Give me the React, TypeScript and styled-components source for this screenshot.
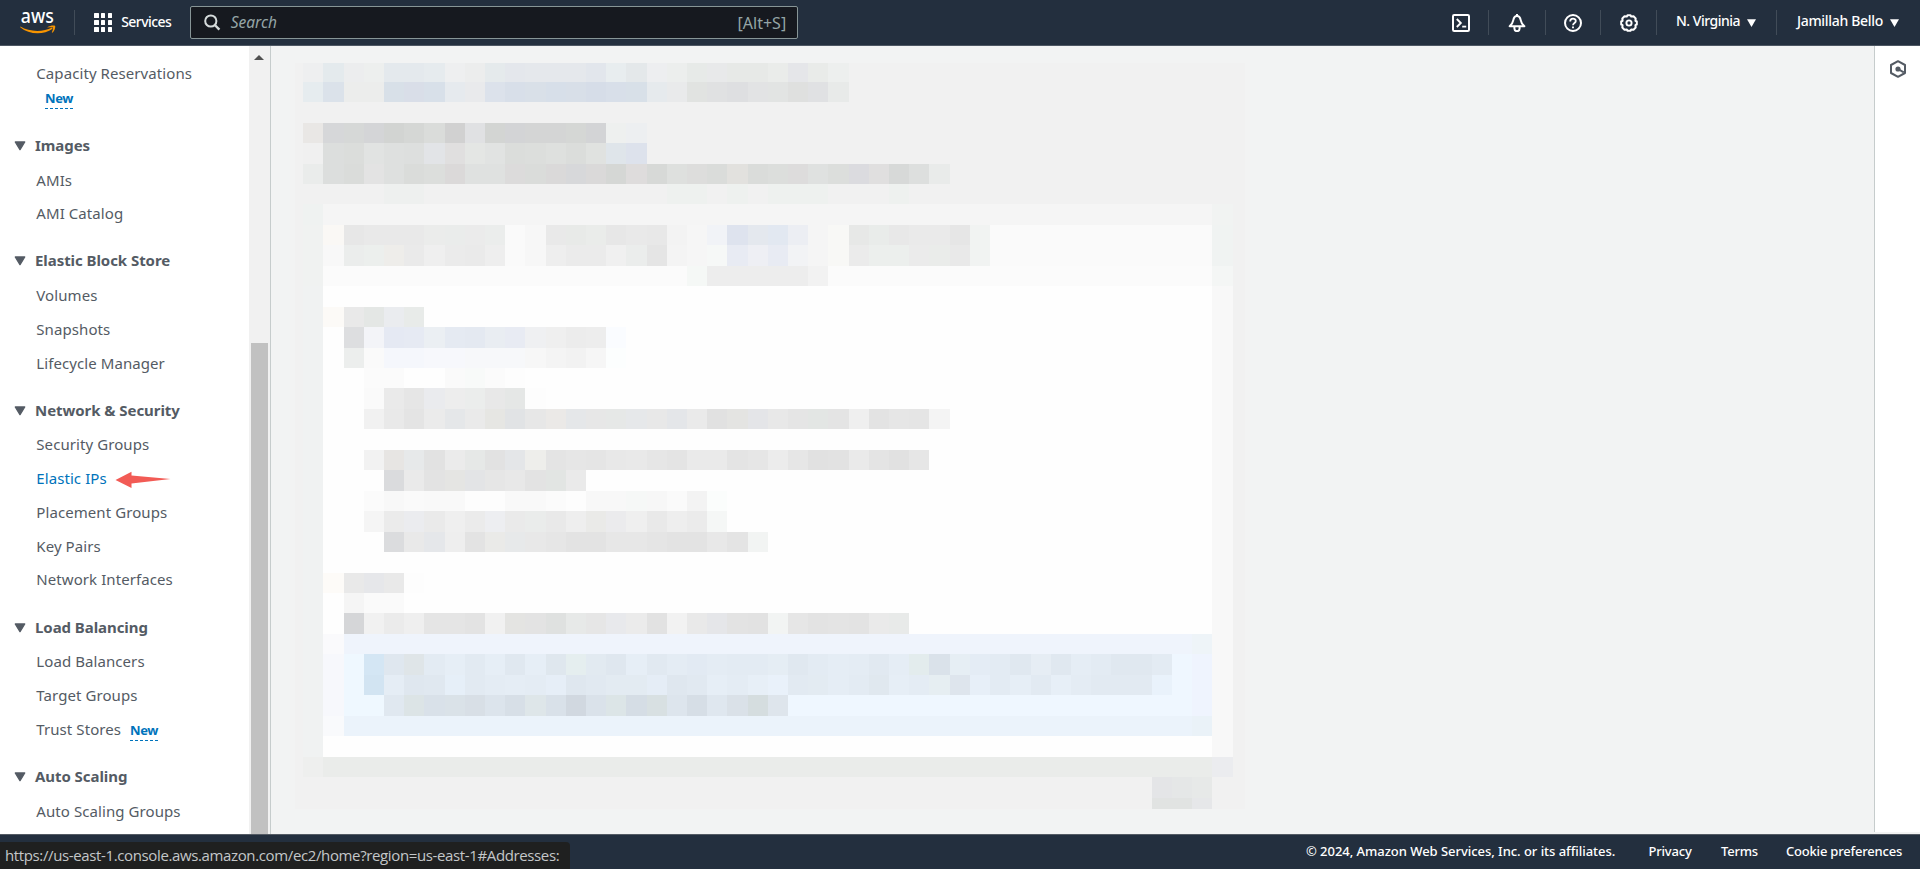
import React from 'react';
import styled, { createGlobalStyle } from 'styled-components';

const GlobalStyle = createGlobalStyle`
  * { box-sizing: border-box; }
  html, body { margin: 0; padding: 0; }
  body {
    overflow: hidden;
    font-family: "Noto Sans", "Liberation Sans", sans-serif;
    background: #f2f3f3;
  }
`;

const Page = styled.div`
  position: relative;
  display: flex;
  flex-direction: column;
  width: 1920px;
  height: 869px;
  overflow: hidden;
`;

/* ---------- top navigation ---------- */

const NavBar = styled.header`
  display: flex;
  align-items: center;
  flex: none;
  height: 46px;
  padding: 0 21px 0 20px;
  background: #232f3e;
  border-bottom: 1px solid #4d5763;
  color: #fff;
`;

const Logo = styled.svg`
  flex: none;
  display: block;
  overflow: visible;
`;

const Divider = styled.span<{ $before: number; $after: number }>`
  flex: none;
  width: 1px;
  height: 25px;
  margin: 0 ${(p) => p.$after}px 0 ${(p) => p.$before}px;
  background: #414c58;
`;

const AppGrid = styled.span`
  display: grid;
  grid-template-columns: repeat(3, 4.6px);
  grid-auto-rows: 4.6px;
  gap: 2.2px;
  margin-right: 9px;
`;

const AppDot = styled.i`
  background: #fff;
  border-radius: 0.5px;
`;

const ServicesLabel = styled.span`
  width: 69px;
  font-size: 14px;
  font-weight: 500;
  line-height: 20px;
  letter-spacing: -0.55px;
  margin-top: -2px;
`;

const SearchBox = styled.div`
  display: flex;
  align-items: center;
  width: 608px;
  height: 33px;
  padding: 0 11px 0 13px;
  background: #16191f;
  border: 1px solid #879596;
  border-radius: 2px;
`;

const SearchHint = styled.span`
  flex: 1;
  padding-left: 9.5px;
  font-size: 15.5px;
  font-style: italic;
  line-height: 20px;
  color: #95a5a6;
  margin-top: -1px;
`;

const Shortcut = styled.span`
  font-size: 16px;
  line-height: 20px;
  color: #95a5a6;
`;

const NavSpacer = styled.span`
  flex: 1;
`;

const NavIcon = styled.svg`
  flex: none;
  display: block;
`;

const NavLabel = styled.span<{ $width: number; $tracking: number }>`
  width: ${(p) => p.$width}px;
  font-size: 14px;
  font-weight: 500;
  line-height: 20px;
  letter-spacing: ${(p) => p.$tracking}px;
  white-space: nowrap;
  margin-top: -3px;
`;

const AwsLogo = () => (
  <Logo width="36" height="26" viewBox="0 0 36 26">
    <text
      x="0.8"
      y="13.4"
      fontFamily="Noto Sans, sans-serif"
      fontSize="20"
      fontWeight="500"
      fill="#fff"
      textLength="33"
      lengthAdjust="spacingAndGlyphs"
    >
      aws
    </text>
    <path d="M0.4 16.6 C9 22 23 22.4 32 17.6 L32.6 18.8 C23 25.4 9 24.6 0.2 17.2Z" fill="#f79400" />
    <path d="M27.4 17.2 C30 15.4 34 15 35.2 15.9 C35.6 18 34 21.4 32.4 22.8 L31.8 22.4 C32.6 20.6 33.4 18.4 33 17.6 C32 16.9 29.6 17.2 27.6 17.6Z" fill="#f79400" />
  </Logo>
);

const SearchIcon = () => (
  <NavIcon width="17" height="17" viewBox="0 0 17 17" fill="none" stroke="#d5dbdb" strokeWidth="2">
    <circle cx="6.8" cy="7" r="5.6" />
    <path d="M10.8 11 L15.4 15.6" strokeWidth="2.4" />
  </NavIcon>
);

const TerminalIcon = () => (
  <NavIcon width="18" height="18" viewBox="0 0 18 18" fill="none" stroke="#fff" strokeWidth="2" strokeLinejoin="round">
    <rect x="1" y="1" width="16" height="16" rx="1.2" />
    <path d="M4.8 5 L8.8 9 L4.8 13" strokeWidth="1.9" strokeLinejoin="miter" />
    <path d="M10.2 12.6 H14.2" strokeWidth="1.8" />
  </NavIcon>
);

const BellIcon = () => (
  <NavIcon width="18" height="18" viewBox="0 0 18 18" fill="none" stroke="#fff" strokeWidth="2" strokeLinejoin="round">
    <path d="M9 2 C6.6 2 5.7 3.9 5.3 6.2 C4.9 8.8 3.6 10.6 1.6 12.2 H16.4 C14.4 10.6 13.1 8.8 12.7 6.2 C12.3 3.9 11.4 2 9 2Z" />
    <path d="M9 0 V2" />
    <path d="M6.4 13 V14.6 C6.4 18 11.6 18 11.6 14.6 V13" />
  </NavIcon>
);

const HelpIcon = () => (
  <NavIcon width="18" height="18" viewBox="0 0 18 18" fill="none" stroke="#fff" strokeWidth="2">
    <circle cx="9" cy="9" r="8" />
    <path d="M6.2 7.4 C6.2 3.6 11.8 3.8 11.8 7 C11.8 9 9 8.9 9 11.2" strokeWidth="1.8" />
    <path d="M9 12.4 V14.2" strokeWidth="1.9" />
  </NavIcon>
);

const GearIcon = () => (
  <NavIcon width="18" height="18" viewBox="0 0 18 18" fill="none" stroke="#fff" strokeLinejoin="round">
    <path
      d="M7.5 1.2 H10.5 L11.2 2.6 L13.5 2.3 L15.7 4.5 L15.4 6.8 L16.8 7.5 V10.5 L15.4 11.2 L15.7 13.5 L13.5 15.7 L11.2 15.4 L10.5 16.8 H7.5 L6.8 15.4 L4.5 15.7 L2.3 13.5 L2.6 11.2 L1.2 10.5 V7.5 L2.6 6.8 L2.3 4.5 L4.5 2.3 L6.8 2.6Z"
      strokeWidth="2"
    />
    <circle cx="9" cy="9" r="2.6" strokeWidth="1.9" />
  </NavIcon>
);

const CaretIcon = () => (
  <NavIcon width="9" height="8" viewBox="0 0 9 8">
    <path d="M0 0.3 H9 L4.5 8Z" fill="#fff" />
  </NavIcon>
);

/* ---------- body ---------- */

const Body = styled.div`
  display: flex;
  flex: none;
  height: 788px;
`;

const Sidebar = styled.nav`
  flex: none;
  width: 249px;
  padding: 11.3px 0 0 14px;
  background: #fff;
  overflow: hidden;
  color: #545b64;
`;

const NavItem = styled.div<{ $active?: boolean }>`
  display: flex;
  align-items: baseline;
  height: 33.75px;
  padding-left: 22.3px;
  font-size: 15px;
  line-height: 33.75px;
  letter-spacing: 0.08px;
  white-space: nowrap;
  color: ${(p) => (p.$active ? '#0073bb' : '#545b64')};
`;

const NewBadge = styled.span`
  padding-bottom: 1px;
  border-bottom: 1px dashed #0073bb;
  font-size: 13px;
  font-weight: 700;
  line-height: 18px;
  letter-spacing: -0.4px;
  color: #0073bb;
`;

const BadgeRow = styled.div`
  display: flex;
  align-items: flex-start;
  height: 26.4px;
  padding-left: 31px;
  margin-top: -2px;
`;

const InlineBadge = styled.span`
  display: flex;
  align-items: baseline;
  margin-left: 9px;
`;

const GroupTitle = styled.div`
  display: flex;
  align-items: flex-start;
  gap: 8px;
  height: 35.8px;
  margin-top: 12.3px;
  font-size: 15px;
  font-weight: 700;
  line-height: 35px;
  letter-spacing: -0.06px;
`;

const DisclosureArrow = styled.svg`
  margin-top: 13px;
`;

const Pointer = styled.svg`
  align-self: center;
  margin-left: 8px;
  margin-top: 1px;
`;

const Disclosure = () => (
  <DisclosureArrow width="13" height="10" viewBox="0 0 13 10">
    <path d="M1.3 1 H10.7 L6 8.6Z" fill="#545b64" stroke="#545b64" strokeWidth="1.4" strokeLinejoin="round" />
  </DisclosureArrow>
);

const ScrollTrack = styled.div`
  flex: none;
  display: flex;
  flex-direction: column;
  align-items: center;
  width: 21px;
  padding: 9px 2px 0 1px;
  background: #f1f1f1;
`;

const ScrollThumb = styled.div`
  width: 17px;
  height: 491px;
  margin-top: auto;
  background: #c1c1c1;
`;

const Main = styled.main`
  flex: 1;
  padding: 17px 0 0 24px;
  background: #f2f3f3;
  border-left: 1px solid #c6cccc;
`;

const HelpRail = styled.aside`
  flex: none;
  width: 46px;
  height: 786px;
  padding: 14px 0 0 15px;
  background: #fff;
  border-left: 1px solid #c6cccc;
`;

/* ---------- redacted content ---------- */

const Mosaic = styled.div`
  display: grid;
  width: 950px;
  grid-template-rows: 18.7px repeat(35, 20.457px) 11.3px;
`;

const MosaicRow = styled.div`
  display: grid;
  grid-template-columns: 8.2px repeat(46, 20.206px) 12.3px;
`;

const Tile = styled.i``;

const FRAME = 'f1f1f1';

const PANEL_ROWS: Record<number, [string, string, string]> = {
  7: ['eff2f1', 'f5f5f5', 'f1f3f2'],
  8: ['f0f2f1', 'fafafa', 'f0f3f2'],
  9: ['f0f2f1', 'fafafa', 'f0f3f2'],
  10: ['f0f2f1', 'fbfbfb', 'f4f6f5'],
  34: ['eeefee', 'eaecea', 'ebecef'],
};

// Tiles per row: "column:colour colour*repeat ..."; several segments are split by "|".
const TILES: Record<number, string> = {
  0: '1:eeeff0 e4eaed ecedee edefee e4e9ed*2 e6ebee eeeff0 eceded e5eaec e4e7ec e5e8ec*3 e2e6ec e8edef e4e8ea edeef0 eceeed e7eae8 e8e9ea e7e9e7*2 eaecea e5e6e9 e9ebe9 edefee',
  1: '1:e6ecef dbe2ea ecedec*2 d8e0e8 d9dee8 d8e0e9 e6eaee e9eaec dce2eb d8dfe9 d9e0e8 d7dfe9 d8dfe8 d6dde8 d8dfe9 d8e0e8 e6eaed e9eaeb e1e3e1 e0e1e2 dedfe1 e2e3e4 e2e4e3 dfe0df e0e1e3 e8eae9',
  3: '1:e9e7e5 d6d7d9 d6d8d7 d4d5d7 d2d4d2 d5d7d5 dadcda d1d1d1 e0e1e3 d3d5d3 d3d4d6 d4d5d5*2 d5d7d5 d3d4d6 eef0ef edeff1',
  4: '1:f0f0f0 dcdedd dbdddb e1e3e2 dee0df dddfde e2e4e7 e0dfdf e4e6e4 e1e3e2 dbdddb dcdedc dee0de dbdddb e0e2e0 dfe5ea dde2ec',
  5: '1:eaeceb dcdedd dadcda e3e3e3 dee0df dadcda dcdedc dbd9d9 dfe1e0*2 dcdbdb dadcda dad9d9 d7d8da dad9d9 d5d7d5 dedcdc d7d9d7 dee0de dddddc dadcda e2e1de dadcda dcdedc dddcdc dfe1e0 dcdedc dbdbdf e0dfdf d7d9d8 dddfde e9ebea',
  6: '5:eef0ef*2|19:eef1ef*2|22:eef1ef|24:eef1ef*3|30:eef1ef',
  8: '2:faf8f5 e7e7e7 e9e9e9*3 ebeceb eaeceb ebebeb ebedec fafafa f7f7f7 e9e9e9 e8eae8 eaecea e7e7e7 e9e9e9 e8e8e8 f3f3f3 f6f6f6 f1f3f7 dee3ee e4e8ee e2e8f1 eceef3 f5f5f5 f8f8f6 e7e8e7 e9ecea e8e8e8 eaeaea*2 e6e6e6 f1f3f2',
  9: '2:f8f8f8 ebedec ecefed eeedea eaeaea efefef ebebeb eaeaea eeeeee fafafa f7f7f7 eeeeee ebebeb*2 f0f0f0 ebedec e5e5e5 f4f4f4 f6f6f6 f6f8f7 e8ebf3 eeeff4 e8ebf3 f2f3f5 f5f5f5 f8f8f6 ebebeb ecefed*2 ebebeb eaecea e9e9e9 f1f3f2',
  10: '20:f5f8f6 ededed*5 f2f2f2',
  12: '2:fcfaf7 e9e9e9 e4e7e5 eaecef e8ebe9',
  13: '3:dddee0 f3f4f8 e5e9f3 e6eaf3 ebeff3 e5eaf2 e4e9f1 e9edf2 e8ebf3 eff0f2 efefef ececec ededed fafcff',
  14: '3:eceeed fafafa f5f7fc*2 f7f8fc*2 f7f8fa*3 f7f7f7 f4f4f4 f2f2f2 f6f6f6 fcfefe',
  15: '4:fbfbfb*2|8:fafafa f8faf9 fbfbfb fdfdfd',
  16: '4:fafafa eaeaea e6e6e6 eaebee ededed ebedec e8e8e8 e5e7e6 fdfdfd',
  17: '4:f1f1f1 e9e9e9 e4e4e4 ebebeb e5e7e9 eaeaea e6e6e3 e1e3e5 e7e7e7 ebe9e7 e5e7e9 e7e7e7 e6e8e7 e6e8ea e8e8e8 e4e6e9 eaeaea e1e1e1 e4e4e2 e4e5e8 e8e8e8 e5e5e5 e3e6e4 e4e4e4 efefef e3e3e3 e6e6e6 e5e5e5 f4f4f4',
  19: '4:f2f2f2 e7e5e3 e7e9ea e2e2e2 ebebeb e6e8e7 e2e2e2 e4e6e8 eeeeeb e4e4e4 e6e6e6 e5e5e5 e8e8e8 e9e9e9 e6e6e6 e4e4e4 eaeaea*2 e4e4e4 e6e6e6 ececec e6e6e6 e1e1e1 e2e2e2 eaeaea e4e4e4 e1e1e1 e6e6e6',
  20: '5:dadbdd eaeaea e3e3e3 e5e5e3 e3e4e6 e6e6e6 e8e8e8 e3e3e3 e2e5e3 eaeaea',
  21: '4:fbfbfb f8f8f8 fafafa f9f9f9*2 fdfdfd*2 f9f9f9*2 fbfbfb fdfdfd f8f8f8*2 f6f8f7 f7f7f7 fafafa f3f3f3 fbfdfc',
  22: '4:f5f5f5 ebebeb ebecef eaeaea efefef ebebeb edeef1 eaeaea eaeceb e9e9e9 eeeeee eaeae8 ebebed efefef e9e9e9 eeeeee ebebeb f5f7f6',
  23: '5:dbdcde e9e9e9 e5e7ea eeeeee e3e3e3 eaeae8 e7e9ea e8e8e8 e6e6e6 e3e3e3*2 e7e7e7*2 e5e5e5 e3e3e3*2 e8e8e8 e4e4e4 f2f4f3',
  25: '2:fdfbf8 e9e9e9 e6e7ea e9e9e9 fdfdfd',
  26: '3:f5f5f5 fafafa*2',
  27: '3:d5d6d8 f1f1f1 ebebeb efefef e5e5e5*2 e3e3e3 f1f1f1 e4e4e2 e3e3e3 dfe1e0 e7e9e8 e6e6e6 e8e9ec ebebeb e2e2e2 f2f2f2 e9e9e9 e5e6e9 e3e3e3 e2e2e2 f2f4f3 e6e6e6 e3e3e3 e4e4e4 e3e3e3 eaeaea e8eae9',
  28: '2:fafafc eff4fc*42 eef4f8',
  29: '2:f7f8fc eff8ff d4e6f4 dfe7ef dfe5e8 e3ebf3 e6eef6 e2eaf2 e6eef6 e0e8f0 e6eef6 dfe7ee e5eeef e2eaf1 dfe7ef e6eef6 e1e9f1 e4ecf4 e2eaf3 e4ecf4 e3ebf3*2 e5edf4 e0e8f0 e3ebf3 e5edf5 e4ecf4 e1e9f1 e5edf5 e3eced dae2ea e6eef4 e4ecf5 e3ebf3 e0e8f0 e6edf4 e0e8f0 e5edf5 e3ebf3 e0e8f0*2 e3ebf3 eff7ff eff4fe',
  30: '2:f7f8fc eff8ff d2e4f2 e5edf5 dfe7ef e0e8f0 e6eff8 e2eaf2 e4ecf4 e5edf5 e4ecf4 e6eef7 dfe7ef e1e9f1 e3ebf2*2 e5edf6 dfe7ef e1e9f1 e6eef6 e4ecf4 e7eff7 e9f1fa e2eaf2 e3ebf2 e5edf5 e3ebf3 e0e8ef e6eef6 e4ecf4 e6eef2 dee5ed e7eff8 e3ebf3 e6eef6 e2eaf2 e7eff7 e4ecf4 e2eaf2*3 e9f2fb eff7ff eff4fe',
  31: '2:f7f8fc eff8ff*2 e0e8f0 dce4e6 d9e1e9 dae2e8 d8dfe6 dce4ec d7dfe7 dee6e9 d9e1e9 d1d8e0 dae2ea dce5e7 d5dde5 d8e0e2 dde5ed d6dee6 dfe7ef dae1e8 d5dddf dee5ec eff7ff*20 eff4fe',
  32: '2:f9fafc ebf3fb*42 eaf2f8',
  35: '43:e4e5e7 e5e7e7 e7e9e8',
  36: '43:e1e3e2*2 e6e7e9',
};

type Run = { tone: string; span: number };

const buildRow = (index: number): Run[] => {
  const cells: string[] = Array(48).fill(FRAME);
  if (index >= 7 && index <= 34) {
    const [left, middle, right] = PANEL_ROWS[index] ?? ['f0f2f2', 'fefefe', 'f8f8f8'];
    cells[1] = left;
    cells.fill(middle, 2, 46);
    cells[46] = right;
  }
  (TILES[index] ?? '').split('|').filter(Boolean).forEach((segment) => {
    const [start, list] = segment.split(':');
    let column = Number(start);
    list.split(' ').forEach((token) => {
      const [tone, repeat = '1'] = token.split('*');
      for (let i = 0; i < Number(repeat) && column < 46; i += 1) {
        cells[column] = tone;
        column += 1;
      }
    });
  });
  return cells.reduce<Run[]>((runs, tone) => {
    const last = runs[runs.length - 1];
    if (last && last.tone === tone) last.span += 1;
    else runs.push({ tone, span: 1 });
    return runs;
  }, []);
};

const ROWS = Array.from({ length: 37 }, (_, index) => buildRow(index));

const RedactedContent = () => (
  <Mosaic>
    {ROWS.map((runs, r) => (
      <MosaicRow key={r}>
        {runs.map((run, i) => (
          <Tile key={i} style={{ backgroundColor: `#${run.tone}`, gridColumn: `span ${run.span}` }} />
        ))}
      </MosaicRow>
    ))}
  </Mosaic>
);

/* ---------- footer ---------- */

const Footer = styled.footer`
  display: flex;
  align-items: center;
  justify-content: flex-end;
  flex: none;
  height: 35px;
  padding: 0 17.5px 2px 0;
  background: #232f3e;
  border-top: 1px solid #545b64;
  color: #fff;
  font-size: 13px;
  font-weight: 500;
  line-height: 20px;
  white-space: nowrap;
`;

const Copyright = styled.span`
  width: 342.5px;
  letter-spacing: -0.04px;
`;

const FooterLink = styled.span<{ $width: number }>`
  width: ${(p) => p.$width}px;
  letter-spacing: -0.2px;
`;

const StatusUrl = styled.div`
  position: absolute;
  left: 0;
  bottom: 0;
  width: 570px;
  height: 27px;
  padding-left: 5px;
  border-top-right-radius: 4px;
  background: #1f2020;
  color: #c4c7c9;
  font-family: "Open Sans", "Noto Sans", sans-serif;
  font-size: 15px;
  line-height: 27px;
  letter-spacing: -0.37px;
  white-space: nowrap;
`;

const GROUPS = [
  { title: 'Images', items: ['AMIs', 'AMI Catalog'] },
  { title: 'Elastic Block Store', items: ['Volumes', 'Snapshots', 'Lifecycle Manager'] },
  {
    title: 'Network & Security',
    items: ['Security Groups', 'Elastic IPs', 'Placement Groups', 'Key Pairs', 'Network Interfaces'],
  },
  { title: 'Load Balancing', items: ['Load Balancers', 'Target Groups', 'Trust Stores'] },
  { title: 'Auto Scaling', items: ['Auto Scaling Groups'] },
];

export default function App() {
  return (
    <Page>
      <GlobalStyle />
      <NavBar>
        <AwsLogo />
        <Divider $before={18} $after={19} />
        <AppGrid>
          {Array.from({ length: 9 }, (_, i) => (
            <AppDot key={i} />
          ))}
        </AppGrid>
        <ServicesLabel>Services</ServicesLabel>
        <SearchBox>
          <SearchIcon />
          <SearchHint>Search</SearchHint>
          <Shortcut>[Alt+S]</Shortcut>
        </SearchBox>
        <NavSpacer />
        <TerminalIcon />
        <Divider $before={18} $after={19} />
        <BellIcon />
        <Divider $before={19} $after={18} />
        <HelpIcon />
        <Divider $before={18} $after={19} />
        <GearIcon />
        <Divider $before={18} $after={19} />
        <NavLabel $width={71} $tracking={-0.5}>N. Virginia</NavLabel>
        <CaretIcon />
        <Divider $before={20} $after={20} />
        <NavLabel $width={93} $tracking={-0.32}>Jamillah Bello</NavLabel>
        <CaretIcon />
      </NavBar>

      <Body>
        <Sidebar>
          <NavItem>Capacity Reservations</NavItem>
          <BadgeRow>
            <NewBadge>New</NewBadge>
          </BadgeRow>
          {GROUPS.map((group) => (
            <React.Fragment key={group.title}>
              <GroupTitle>
                <Disclosure />
                {group.title}
              </GroupTitle>
              {group.items.map((item) => (
                <NavItem key={item} $active={item === 'Elastic IPs'}>
                  {item}
                  {item === 'Trust Stores' && (
                    <InlineBadge>
                      <NewBadge>New</NewBadge>
                    </InlineBadge>
                  )}
                  {item === 'Elastic IPs' && (
                    <Pointer width="56" height="18" viewBox="0 0 56 18">
                      <path d="M0.5 9 L16.5 0.8 V4.5 L55.5 8 L16.5 12.6 V17Z" fill="#f25b55" />
                    </Pointer>
                  )}
                </NavItem>
              ))}
            </React.Fragment>
          ))}
        </Sidebar>
        <ScrollTrack>
          <svg width="10" height="5" viewBox="0 0 10 5">
            <path d="M5 0 L10 5 H0Z" fill="#505050" />
          </svg>
          <ScrollThumb />
        </ScrollTrack>
        <Main>
          <RedactedContent />
        </Main>
        <HelpRail>
          <svg width="16" height="18" viewBox="0 0 16 18" fill="none" stroke="#545b64" strokeWidth="2" strokeLinejoin="round">
            <path d="M8 1.2 L15 5 V13 L8 16.8 L1 13 V5Z" />
            <circle cx="8" cy="9" r="1.6" fill="#545b64" />
            <path d="M8 9 L13.8 12.4" />
          </svg>
        </HelpRail>
      </Body>

      <Footer>
        <Copyright>© 2024, Amazon Web Services, Inc. or its affiliates.</Copyright>
        <FooterLink $width={72.5}>Privacy</FooterLink>
        <FooterLink $width={65}>Terms</FooterLink>
        <FooterLink $width={116.5}>Cookie preferences</FooterLink>
      </Footer>
      <StatusUrl>https://us-east-1.console.aws.amazon.com/ec2/home?region=us-east-1#Addresses:</StatusUrl>
    </Page>
  );
}
